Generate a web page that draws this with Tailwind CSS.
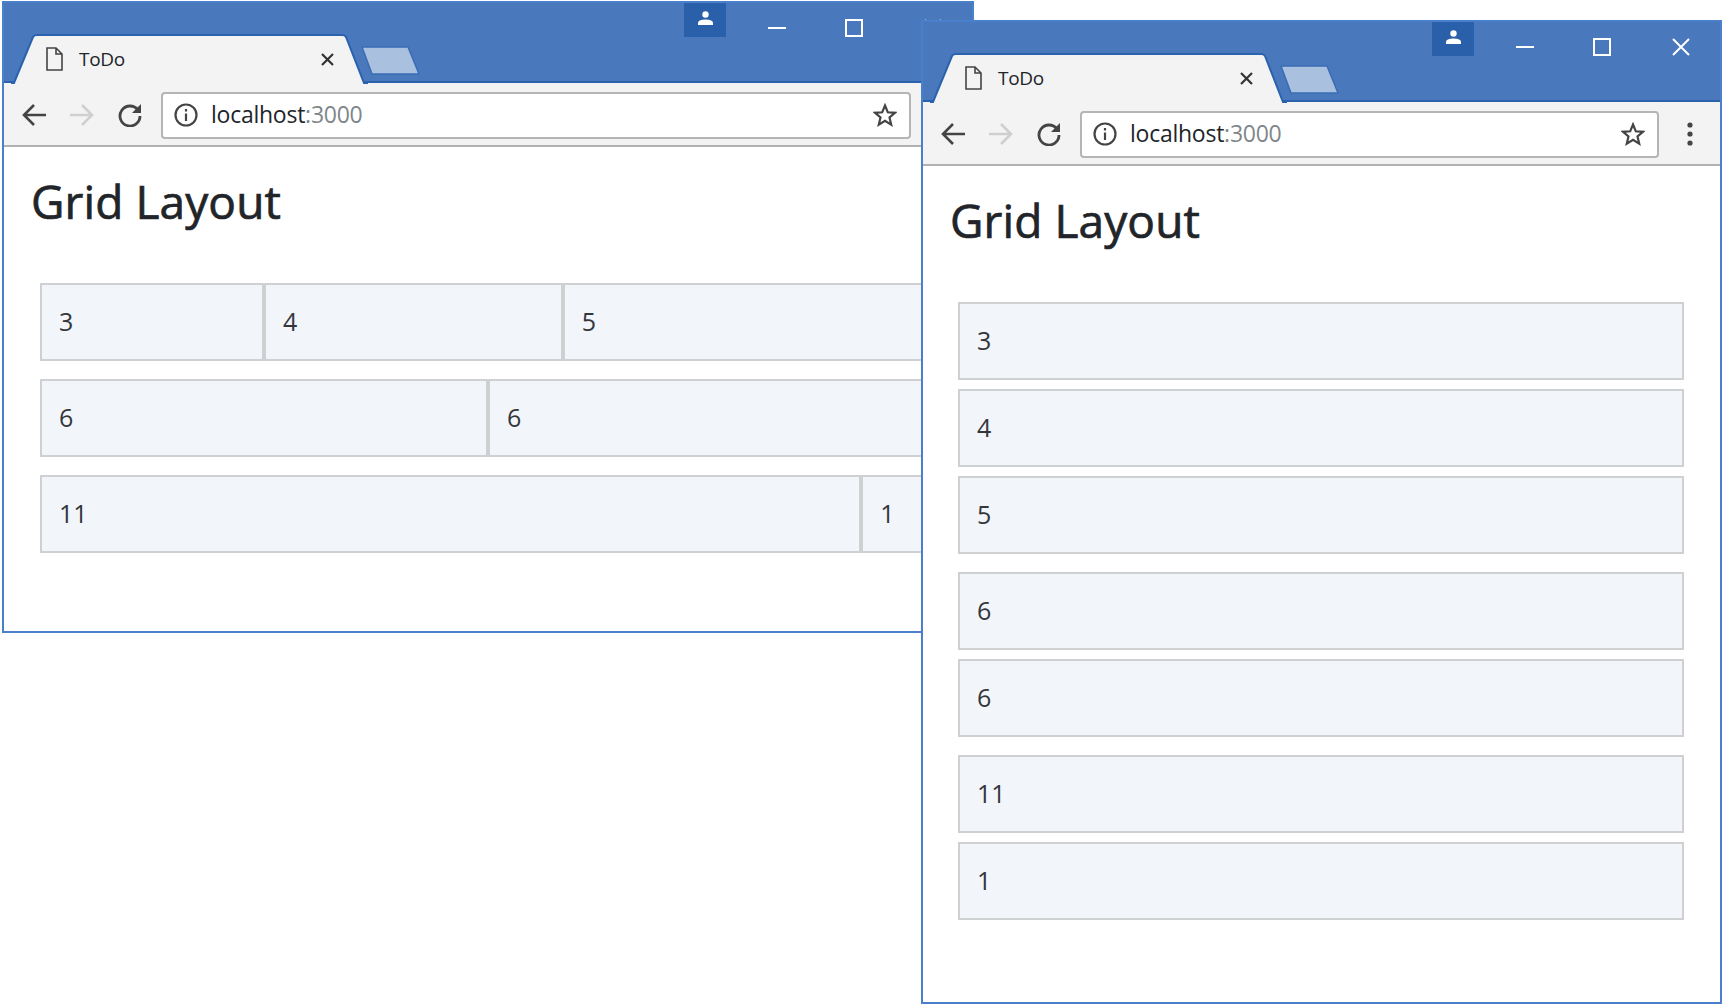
<!DOCTYPE html>
<html lang="en">
<head>
    <meta charset="UTF-8">
    <title>Grid Layout</title>
    <script src="https://cdn.jsdelivr.net/npm/@tailwindcss/browser@4"></script>
</head>
<body class="relative w-[1725px] h-[1008px] bg-white overflow-hidden font-['Open_Sans',sans-serif] text-[#212529]">

    <!-- left window (wide layout) -->
    <div class="absolute left-[2px] top-[1px] w-[972px] h-[632px] border-2 border-[#4a7fcb] bg-white flex flex-col overflow-hidden">
        <div class="relative h-[80px] shrink-0 bg-[#4a78bc] border-b-2 border-[#2a62ae] flex justify-end items-start pr-[30px]">
            <svg class="absolute left-[7px] top-[31px]" width="420" height="50" viewBox="0 0 420 50">
                <path d="M0 49H3L22 3Q23 1 26 1H331Q334 1 335 3L353 49H357" fill="#f3f3f3" stroke="#2a62ae" stroke-width="2"/>
                <path d="M351 13H397L408 40H361Z" fill="#a9c0de" stroke="#3a6cb4" stroke-width="1.5" stroke-linejoin="round"/>
            </svg>
            <div class="absolute left-[42px] top-[44px] w-[288px] h-[24px] flex items-center">
                <svg width="17" height="24" viewBox="0 0 17 24" fill="none" stroke="#444" stroke-width="1.6"><path d="M1 1H10L16 7V23H1ZM10 1V7H16"/></svg>
                <span class="ml-[16px] text-[19px] tracking-[-0.3px]">ToDo</span>
                <svg class="ml-auto" width="13" height="13" viewBox="0 0 13 13" stroke="#333" stroke-width="2.2"><path d="M1 1L12 12M12 1L1 12"/></svg>
            </div>
            <div class="w-[42px] h-[34px] bg-[#2a5fa9] flex justify-center pt-[8px]">
                <svg width="15" height="14" viewBox="0 0 15 14" fill="white"><circle cx="7.5" cy="3.5" r="3.2"/><path d="M0 14V12Q0 8.5 7.5 8.5T15 12V14Z"/></svg>
            </div>
            <svg class="ml-[42px] mt-[16px]" width="18" height="18" viewBox="0 0 18 18" stroke="white" stroke-width="2"><path d="M0 9H18"/></svg>
            <svg class="ml-[59px] mt-[16px]" width="18" height="18" viewBox="0 0 18 18" fill="none" stroke="white" stroke-width="2"><path d="M1 1H17V17H1Z"/></svg>
            <svg class="ml-[61px] mt-[16px]" width="18" height="18" viewBox="0 0 18 18" stroke="white" stroke-width="2"><path d="M1 1L17 17M17 1L1 17"/></svg>
        </div>
        <div class="h-[64px] shrink-0 bg-[#f3f3f3] border-b-2 border-[#b2b2b2] flex items-center pl-[18px] pt-[2px]">
            <svg width="24" height="24" viewBox="0 0 24 24" fill="none" stroke="#444" stroke-width="2.6"><path d="M24 12H3M12 2L2 12L12 22"/></svg>
            <svg class="ml-[24px]" width="24" height="24" viewBox="0 0 24 24" fill="none" stroke="#cfcfcf" stroke-width="2.6"><path d="M0 12H21M12 2L22 12L12 22"/></svg>
            <svg class="ml-[24px]" width="24" height="24" viewBox="0 0 24 24" fill="none" stroke="#444" stroke-width="2.8"><path d="M20 7A10 10 0 1 0 22 13"/><path d="M23 1V10H14Z" fill="#444" stroke="none"/></svg>
            <div class="ml-[19px] flex-1 h-[47px] bg-white border-2 border-[#b5b5b5] rounded-[4px] flex items-center pl-[11px] pr-[12px]">
                <svg width="24" height="24" viewBox="0 0 24 24" fill="none" stroke="#444" stroke-width="2.2"><circle cx="12" cy="12" r="10.5"/><path d="M12 10.5V18M12 6V8.5"/></svg>
                <span class="ml-[13px] -mt-[2px] text-[23px] tracking-[-0.25px]">localhost<span class="text-[#80868b]">:3000</span></span>
                <svg class="ml-auto" width="24" height="24" viewBox="0 0 24 24" fill="none" stroke="#444" stroke-width="2.2"><path d="M12 2.5L14.8 9.3L22 9.8L16.5 14.5L18.2 21.6L12 17.8L5.8 21.6L7.5 14.5L2 9.8L9.2 9.3Z"/></svg>
            </div>
            <div class="w-[61px] flex justify-center shrink-0">
                <svg width="6" height="24" viewBox="0 0 6 24" fill="#444"><circle cx="3" cy="3" r="2.6"/><circle cx="3" cy="12" r="2.6"/><circle cx="3" cy="21" r="2.6"/></svg>
            </div>
        </div>
        <div class="flex-1 pl-[36px] pr-[36px] pt-[26px]">
            <h1 class="-ml-[9px] mb-[54px] text-[46px] leading-[56px] tracking-[0.1px] [-webkit-text-stroke:0.7px_#212529] whitespace-nowrap">Grid Layout</h1>
            <div class="flex flex-col gap-[18px] text-[25px] text-[#33373b]">
                <div class="grid grid-cols-12">
                    <div class="col-span-3 h-[78px] bg-[#f2f5fa] border-2 border-[#cfd0d2] flex items-center pl-[17px]">3</div>
                    <div class="col-span-4 h-[78px] bg-[#f2f5fa] border-2 border-[#cfd0d2] flex items-center pl-[17px]">4</div>
                    <div class="col-span-5 h-[78px] bg-[#f2f5fa] border-2 border-[#cfd0d2] flex items-center pl-[17px]">5</div>
                </div>
                <div class="grid grid-cols-12">
                    <div class="col-span-6 h-[78px] bg-[#f2f5fa] border-2 border-[#cfd0d2] flex items-center pl-[17px]">6</div>
                    <div class="col-span-6 h-[78px] bg-[#f2f5fa] border-2 border-[#cfd0d2] flex items-center pl-[17px]">6</div>
                </div>
                <div class="grid grid-cols-12">
                    <div class="col-span-11 h-[78px] bg-[#f2f5fa] border-2 border-[#cfd0d2] flex items-center pl-[17px]">11</div>
                    <div class="col-span-1 h-[78px] bg-[#f2f5fa] border-2 border-[#cfd0d2] flex items-center pl-[17px]">1</div>
                </div>
            </div>
        </div>
    </div>

    <!-- right window (narrow layout, stacked) -->
    <div class="absolute left-[921px] top-[20px] w-[801px] h-[984px] border-2 border-[#4a7fcb] bg-white flex flex-col overflow-hidden">
        <div class="relative h-[80px] shrink-0 bg-[#4a78bc] border-b-2 border-[#2a62ae] flex justify-end items-start pr-[30px]">
            <svg class="absolute left-[7px] top-[31px]" width="420" height="50" viewBox="0 0 420 50">
                <path d="M0 49H3L22 3Q23 1 26 1H331Q334 1 335 3L353 49H357" fill="#f3f3f3" stroke="#2a62ae" stroke-width="2"/>
                <path d="M351 13H397L408 40H361Z" fill="#a9c0de" stroke="#3a6cb4" stroke-width="1.5" stroke-linejoin="round"/>
            </svg>
            <div class="absolute left-[42px] top-[44px] w-[288px] h-[24px] flex items-center">
                <svg width="17" height="24" viewBox="0 0 17 24" fill="none" stroke="#444" stroke-width="1.6"><path d="M1 1H10L16 7V23H1ZM10 1V7H16"/></svg>
                <span class="ml-[16px] text-[19px] tracking-[-0.3px]">ToDo</span>
                <svg class="ml-auto" width="13" height="13" viewBox="0 0 13 13" stroke="#333" stroke-width="2.2"><path d="M1 1L12 12M12 1L1 12"/></svg>
            </div>
            <div class="w-[42px] h-[34px] bg-[#2a5fa9] flex justify-center pt-[8px]">
                <svg width="15" height="14" viewBox="0 0 15 14" fill="white"><circle cx="7.5" cy="3.5" r="3.2"/><path d="M0 14V12Q0 8.5 7.5 8.5T15 12V14Z"/></svg>
            </div>
            <svg class="ml-[42px] mt-[16px]" width="18" height="18" viewBox="0 0 18 18" stroke="white" stroke-width="2"><path d="M0 9H18"/></svg>
            <svg class="ml-[59px] mt-[16px]" width="18" height="18" viewBox="0 0 18 18" fill="none" stroke="white" stroke-width="2"><path d="M1 1H17V17H1Z"/></svg>
            <svg class="ml-[61px] mt-[16px]" width="18" height="18" viewBox="0 0 18 18" stroke="white" stroke-width="2"><path d="M1 1L17 17M17 1L1 17"/></svg>
        </div>
        <div class="h-[64px] shrink-0 bg-[#f3f3f3] border-b-2 border-[#b2b2b2] flex items-center pl-[18px] pt-[2px]">
            <svg width="24" height="24" viewBox="0 0 24 24" fill="none" stroke="#444" stroke-width="2.6"><path d="M24 12H3M12 2L2 12L12 22"/></svg>
            <svg class="ml-[24px]" width="24" height="24" viewBox="0 0 24 24" fill="none" stroke="#cfcfcf" stroke-width="2.6"><path d="M0 12H21M12 2L22 12L12 22"/></svg>
            <svg class="ml-[24px]" width="24" height="24" viewBox="0 0 24 24" fill="none" stroke="#444" stroke-width="2.8"><path d="M20 7A10 10 0 1 0 22 13"/><path d="M23 1V10H14Z" fill="#444" stroke="none"/></svg>
            <div class="ml-[19px] flex-1 h-[47px] bg-white border-2 border-[#b5b5b5] rounded-[4px] flex items-center pl-[11px] pr-[12px]">
                <svg width="24" height="24" viewBox="0 0 24 24" fill="none" stroke="#444" stroke-width="2.2"><circle cx="12" cy="12" r="10.5"/><path d="M12 10.5V18M12 6V8.5"/></svg>
                <span class="ml-[13px] -mt-[2px] text-[23px] tracking-[-0.25px]">localhost<span class="text-[#80868b]">:3000</span></span>
                <svg class="ml-auto" width="24" height="24" viewBox="0 0 24 24" fill="none" stroke="#444" stroke-width="2.2"><path d="M12 2.5L14.8 9.3L22 9.8L16.5 14.5L18.2 21.6L12 17.8L5.8 21.6L7.5 14.5L2 9.8L9.2 9.3Z"/></svg>
            </div>
            <div class="w-[61px] flex justify-center shrink-0">
                <svg width="6" height="24" viewBox="0 0 6 24" fill="#444"><circle cx="3" cy="3" r="2.6"/><circle cx="3" cy="12" r="2.6"/><circle cx="3" cy="21" r="2.6"/></svg>
            </div>
        </div>
        <div class="flex-1 pl-[35px] pr-[36px] pt-[26px]">
            <h1 class="-ml-[8px] mb-[54px] text-[46px] leading-[56px] tracking-[0.1px] [-webkit-text-stroke:0.7px_#212529] whitespace-nowrap">Grid Layout</h1>
            <div class="flex flex-col gap-[18px] text-[25px] text-[#33373b]">
                <div class="flex flex-col gap-[9px]">
                    <div class="h-[78px] bg-[#f2f5fa] border-2 border-[#cfd0d2] flex items-center pl-[17px]">3</div>
                    <div class="h-[78px] bg-[#f2f5fa] border-2 border-[#cfd0d2] flex items-center pl-[17px]">4</div>
                    <div class="h-[78px] bg-[#f2f5fa] border-2 border-[#cfd0d2] flex items-center pl-[17px]">5</div>
                </div>
                <div class="flex flex-col gap-[9px]">
                    <div class="h-[78px] bg-[#f2f5fa] border-2 border-[#cfd0d2] flex items-center pl-[17px]">6</div>
                    <div class="h-[78px] bg-[#f2f5fa] border-2 border-[#cfd0d2] flex items-center pl-[17px]">6</div>
                </div>
                <div class="flex flex-col gap-[9px]">
                    <div class="h-[78px] bg-[#f2f5fa] border-2 border-[#cfd0d2] flex items-center pl-[17px]">11</div>
                    <div class="h-[78px] bg-[#f2f5fa] border-2 border-[#cfd0d2] flex items-center pl-[17px]">1</div>
                </div>
            </div>
        </div>
    </div>

</body>
</html>
